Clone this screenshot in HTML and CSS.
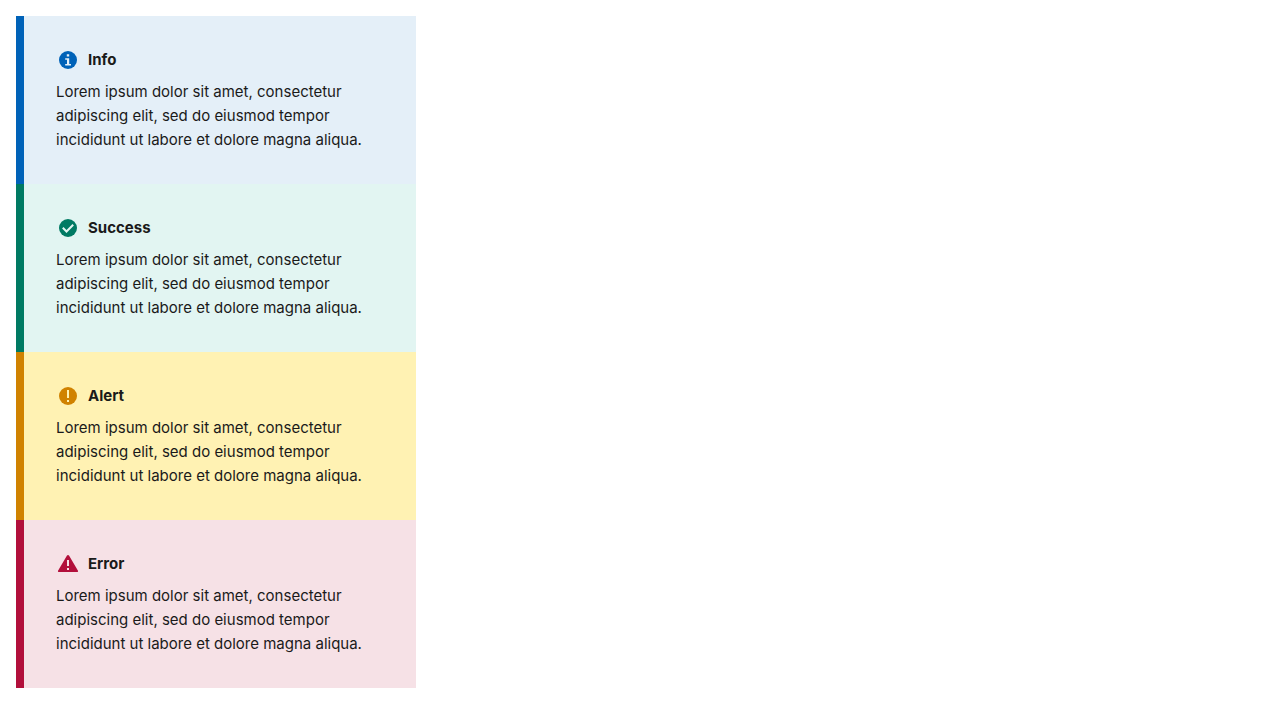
FILE: index.html
```html
<!DOCTYPE html>
<html lang="en">
<head>
<meta charset="utf-8">
<title>Notifications</title>
<link rel="stylesheet" href="styles.css">
</head>
<body>
<main class="notifications">
  <section class="notification info">
    <h2 class="title"><svg class="icon" viewBox="0 0 24 24" aria-hidden="true"><circle cx="12" cy="12" r="9"/><path class="mark" d="M10.8 6.2h2.4v2.2h-2.4zM9.2 10.2h4v5.9H15v1.5H9.2v-1.5H11v-4.4H9.2z"/></svg>Info</h2>
    <p class="text">Lorem ipsum dolor sit amet, consectetur adipiscing elit, sed do eiusmod tempor incididunt ut labore et dolore magna aliqua.</p>
  </section>
  <section class="notification success">
    <h2 class="title"><svg class="icon" viewBox="0 0 24 24" aria-hidden="true"><circle cx="12" cy="12" r="9"/><path class="check" d="M6.8 11.8l3.7 3.7 6.7-6.7"/></svg>Success</h2>
    <p class="text">Lorem ipsum dolor sit amet, consectetur adipiscing elit, sed do eiusmod tempor incididunt ut labore et dolore magna aliqua.</p>
  </section>
  <section class="notification alert">
    <h2 class="title"><svg class="icon" viewBox="0 0 24 24" aria-hidden="true"><circle cx="12" cy="12" r="9"/><path class="mark" d="M11 6h2v8h-2zM11 16h2v2h-2z"/></svg>Alert</h2>
    <p class="text">Lorem ipsum dolor sit amet, consectetur adipiscing elit, sed do eiusmod tempor incididunt ut labore et dolore magna aliqua.</p>
  </section>
  <section class="notification error">
    <h2 class="title"><svg class="icon" viewBox="0 0 24 24" aria-hidden="true"><path d="M12 3q.6 0 1 .6l9 15.2q.5 1.2-.8 1.2H2.8q-1.3 0-.8-1.2l9-15.2q.4-.6 1-.6z"/><path class="mark" d="M11 8h2v6h-2zM11 16h2v2h-2z"/></svg>Error</h2>
    <p class="text">Lorem ipsum dolor sit amet, consectetur adipiscing elit, sed do eiusmod tempor incididunt ut labore et dolore magna aliqua.</p>
  </section>
</main>
</body>
</html>
```
FILE: styles.css
```css
body {
  margin: 16px;
  background: #fff;
  color: #1a1a1a;
  font: 15px/24px Inter, "Liberation Sans", sans-serif;
}

.notifications {
  max-width: 400px;
}

.notification {
  padding: 32px;
  border-left: 8px solid var(--accent);
  background: var(--tint);
}

.info { --accent: #0062b8; --tint: #e4eff8; }
.success { --accent: #007a63; --tint: #e2f5f2; }
.alert { --accent: #d08200; --tint: #fff2b3; }
.error { --accent: #b20f3b; --tint: #f6e1e6; }

.title {
  display: flex;
  align-items: center;
  gap: 8px;
  margin: 0 0 8px;
  font-size: 15px;
  font-weight: 700;
}

.icon {
  width: 24px;
  height: 24px;
  fill: var(--accent);
}

.icon .mark {
  fill: var(--tint);
}

.icon .check {
  fill: none;
  stroke: var(--tint);
  stroke-width: 2;
}

.text {
  margin: 0;
}
```
